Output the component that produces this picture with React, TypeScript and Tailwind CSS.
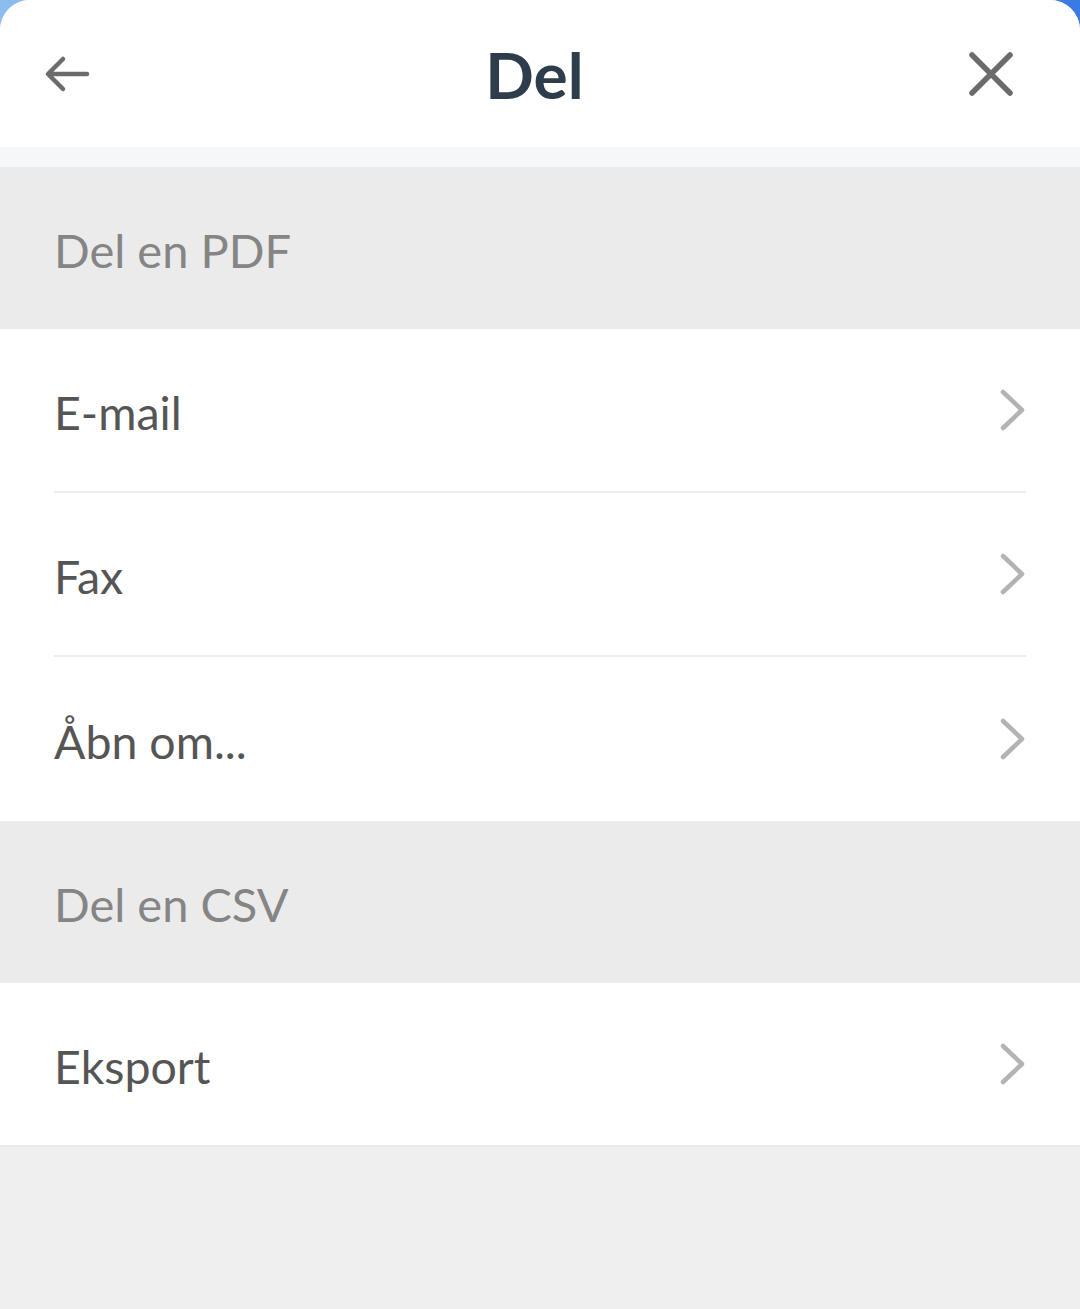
import React from "react";

const ChevronRight = () => (
    <svg width="30" height="44" viewBox="0 0 30 44" fill="none" className="mr-[-2px]">
        <path d="M5 4 L24 22 L5 40" stroke="#b3b3b3" strokeWidth="4.5" strokeLinecap="round" strokeLinejoin="round" />
    </svg>
);

function Row({ label, last, short }: { label: string; last?: boolean; short?: boolean }) {
    return (
        <div className="px-[54px] bg-white">
            <div
                className={`${short ? "h-[162px]" : "h-[164px]"} flex items-center justify-between ${
                    last ? "" : "border-b-2 border-[#ededed]"
                }`}
            >
                <span className="text-[46.5px] text-[#555555] mt-[5px]">{label}</span>
                <ChevronRight />
            </div>
        </div>
    );
}

function SectionHeader({ title }: { title: string }) {
    return (
        <div className="h-[162px] bg-[#ebebeb] flex items-center px-[54px]">
            <span className="text-[47px] text-[#858585] mt-[4px]">{title}</span>
        </div>
    );
}

export default function App() {
    return (
        <div className="w-[1080px] h-[1309px] bg-gradient-to-r from-[#8cbcf0] to-[#3b79e4] font-['Lato','Open_Sans',sans-serif]">
            <div className="h-full rounded-t-[30px] overflow-hidden bg-[#efefef] flex flex-col">
                {/* Header */}
                <div className="h-[147px] bg-white flex items-center justify-between px-[40px] shrink-0">
                    <div className="w-[60px] flex justify-start">
                        <svg width="56" height="56" viewBox="0 0 56 56" fill="none">
                            <path d="M9 28 H47 M23 13 L8 28 L23 43" stroke="#6b6b6b" strokeWidth="4.5" strokeLinecap="round" strokeLinejoin="round" />
                        </svg>
                    </div>
                    <h1 className="text-[64px] font-bold text-[#2e3d4b] leading-none pt-[2px] ml-[10px]">Del</h1>
                    <div className="w-[60px] flex justify-end mr-[21px]">
                        <svg width="56" height="56" viewBox="0 0 56 56" fill="none">
                            <path d="M9 9 L47 47 M47 9 L9 47" stroke="#6b6b6b" strokeWidth="5.5" strokeLinecap="round" />
                        </svg>
                    </div>
                </div>
                <div className="h-[20px] bg-[#f6f7f9] shrink-0" />

                <SectionHeader title="Del en PDF" />
                <Row label="E-mail" />
                <Row label="Fax" />
                <Row label="Åbn om..." last />
                <SectionHeader title="Del en CSV" />
                <Row label="Eksport" last short />
                <div className="flex-1 bg-[#efefef] border-t-2 border-[#e9e9e9]" />
            </div>
        </div>
    );
}
